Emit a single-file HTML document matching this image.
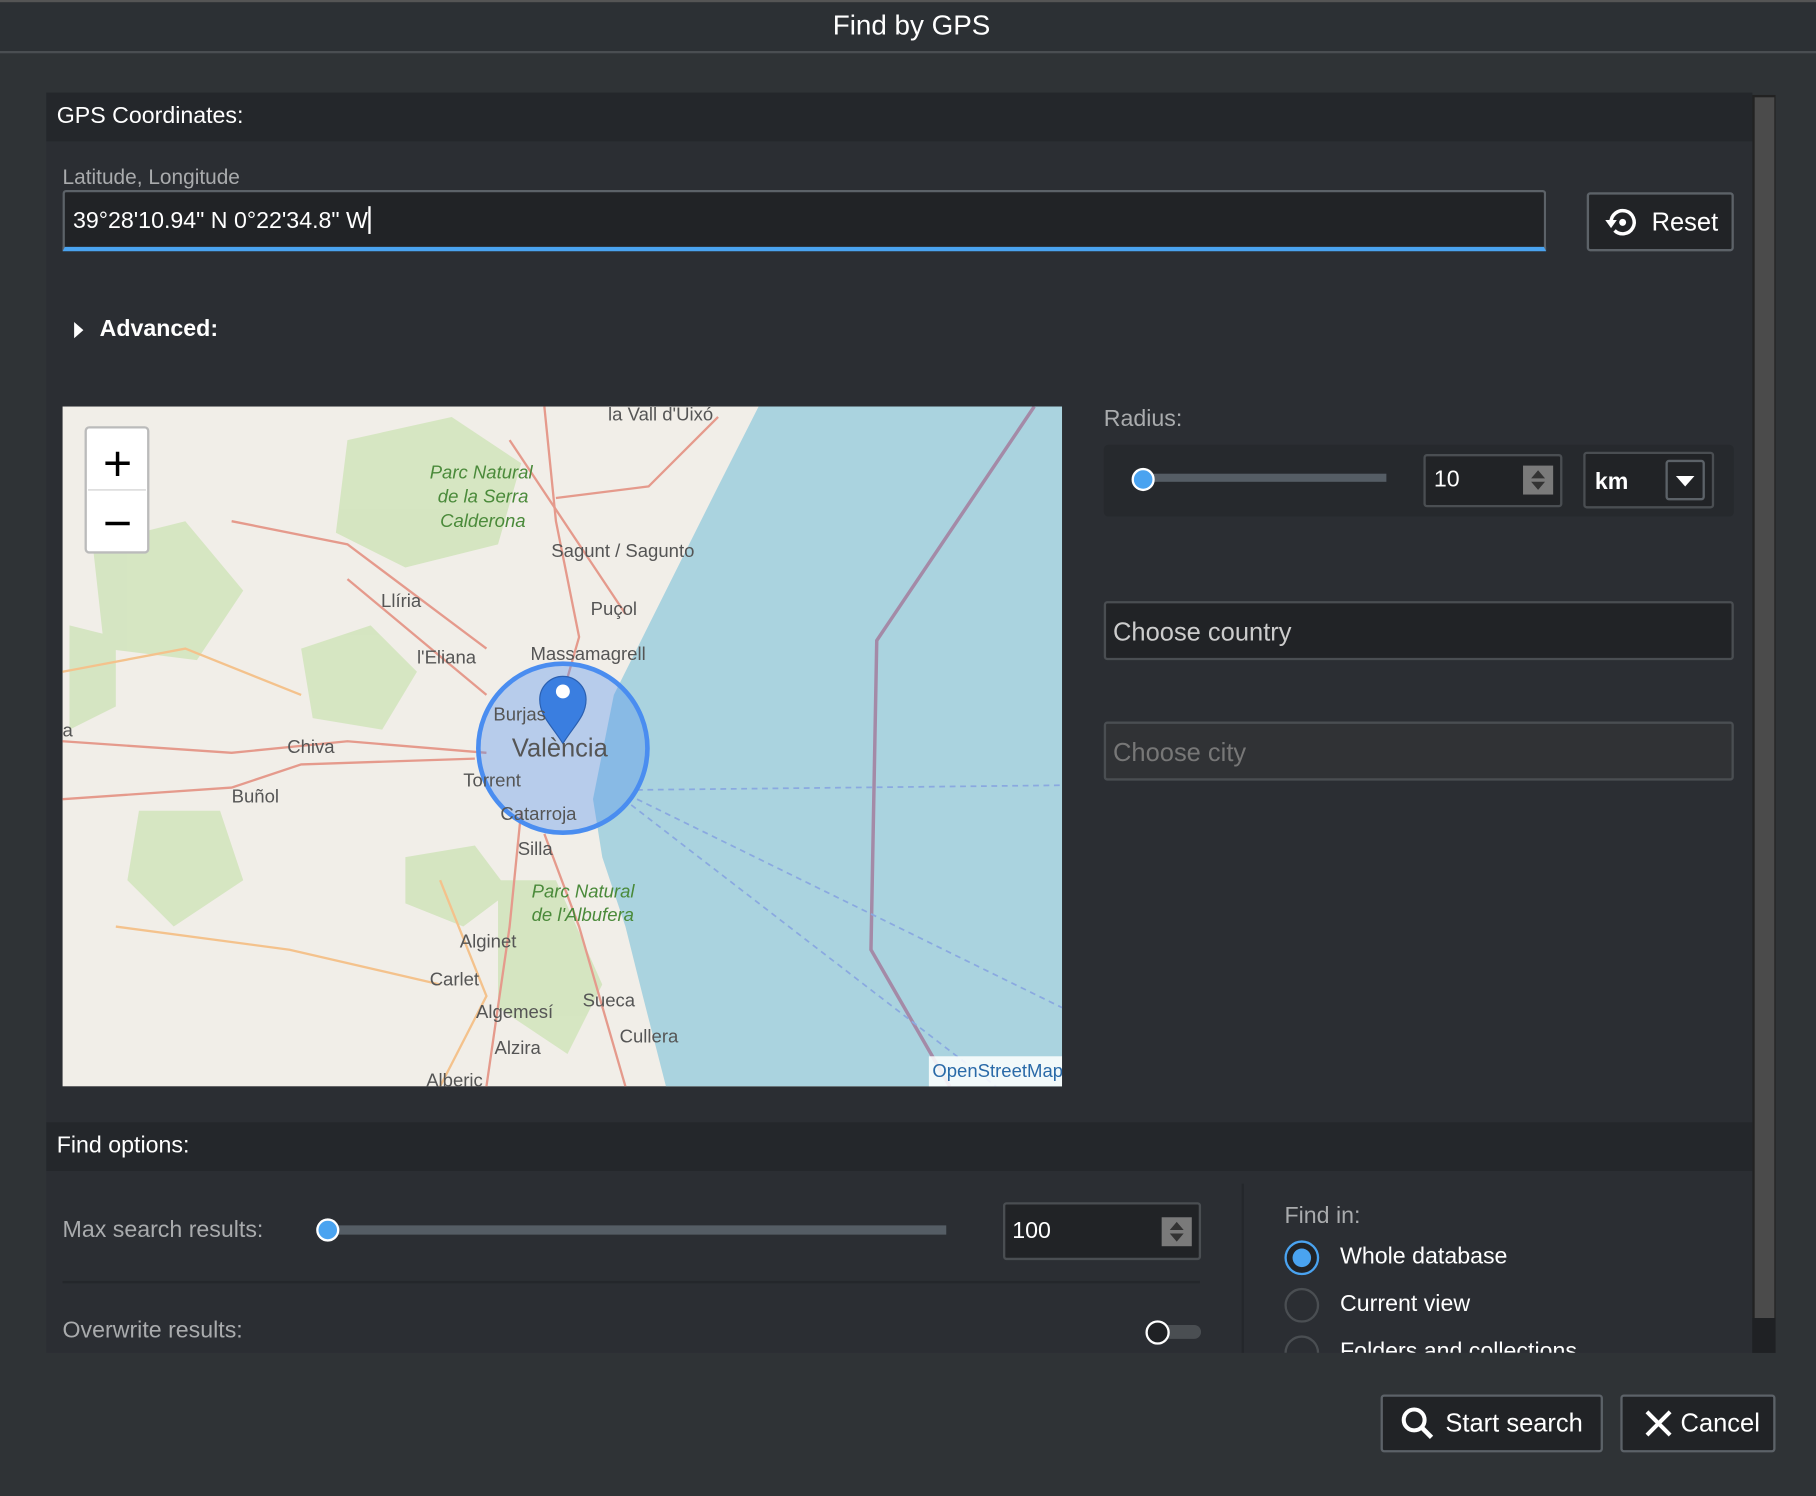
<!DOCTYPE html>
<html><head><meta charset="utf-8"><style>
*{box-sizing:border-box;margin:0;padding:0}
html,body{width:1816px;height:1496px;overflow:hidden;background:#2f3336;font-family:"Liberation Sans",sans-serif}
#s{position:absolute;left:0;top:0;width:1568px;height:1292px;transform:scale(1.1582);transform-origin:0 0;background:#2f3336}
.a{position:absolute}
.t{color:#fff;white-space:nowrap}
.g{color:#a9abad;white-space:nowrap}
</style></head><body><div id="s">
<div class="a" style="left:0;top:0;width:1568px;height:2px;background:#555"></div>
<div class="a" style="left:0;top:2px;width:1568px;height:42px;background:#2c3034"></div>
<div class="a t" style="left:0;width:1568px;top:9px;text-align:center;font-size:24px;padding-left:6px">Find by GPS</div>
<div class="a" style="left:0;top:44px;width:1568px;height:2px;background:#4a4e52"></div>

<div class="a" style="left:40px;top:80px;width:1473px;height:1088px;background:#2b2e33;overflow:hidden">
</div>
<div class="a" style="left:40px;top:80px;width:1473px;height:42px;background:#24272b"></div>
<div class="a t" style="left:49px;top:89px;font-size:20px">GPS Coordinates:</div>
<div class="a" style="left:1513px;top:82px;width:20px;height:1086px;background:#222"></div>
<div class="a" style="left:1515px;top:84px;width:17px;height:1054px;background:#4b4b4b"></div>

<div class="a g" style="left:54px;top:143px;font-size:18px">Latitude, Longitude</div>
<div class="a" style="left:54px;top:164px;width:1281px;height:53px;background:#212326;border:2px solid #5c6268;border-bottom:4px solid #4aa3f0;border-radius:3px 3px 0 0"></div>
<div class="a t" style="left:63px;top:178px;font-size:20px">39°28'10.94" N 0°22'34.8" W<span style="display:inline-block;width:2px;height:24px;background:#fff;vertical-align:-5px"></span></div>
<div class="a" style="left:1370px;top:166px;width:127px;height:51px;background:#212326;border:2px solid #5c6268;border-radius:3px"></div>
<svg class="a" style="left:1384px;top:176px" width="34" height="32" viewBox="0 0 34 32"><path d="M7 16a10 10 0 1 1 3 7" fill="none" stroke="#fff" stroke-width="3"/><path d="M2 14h10l-5 7z" fill="#fff"/><circle cx="17" cy="16" r="3" fill="#fff"/></svg>
<div class="a t" style="left:1426px;top:179px;font-size:22px">Reset</div>

<svg class="a" style="left:62px;top:277px" width="12" height="16"><path d="M2 1l8 7-8 7z" fill="#fff"/></svg>
<div class="a t" style="left:86px;top:273px;font-size:20px;font-weight:bold">Advanced:</div>

<svg class="a" style="left:54px;top:351px" width="863" height="587" viewBox="54 351 863 587">
<rect x="54" y="351" width="863" height="587" fill="#f1eee8"/>
<g fill="#cfe3b8" opacity=".8">
<path d="M300 380l90-20 60 40-20 70-80 20-60-30z"/><path d="M80 470l80-20 50 60-40 60-80-10z"/><path d="M260 560l60-20 40 40-30 50-60-10z"/><path d="M350 740l60-10 30 40-40 30-50-20z"/><path d="M120 700l70 0 20 60-60 40-40-40z"/><path d="M430 760l50 0 40 90-30 60-60-40z"/><path d="M60 540l40 10 0 60-40 20z"/>
</g>
<path d="M655 351L620 420 590 480 560 540 530 600 520 650 512 690 520 740 540 800 555 860 575 938H917V351z" fill="#aad3df"/>
<g fill="none" stroke="#e59a8c" stroke-width="2">
<path d="M54 640 200 650 300 640 420 650"/><path d="M54 690 200 680 260 660 410 655"/><path d="M300 500 420 600"/><path d="M470 351 480 450 500 550 480 620"/><path d="M440 380 500 470 540 530"/><path d="M450 700 440 800 420 938"/><path d="M470 720 500 800 540 938"/><path d="M200 450 300 470 420 560"/><path d="M480 430 560 420 620 360"/>
</g>
<g fill="none" stroke="#f4c28c" stroke-width="2"><path d="M54 580 160 560 260 600"/><path d="M380 760 420 860 380 938"/><path d="M100 800 250 820 380 850"/></g>
<path d="M893 351 757 553 752 820 820 938" fill="none" stroke="#a48aa7" stroke-width="3"/>
<g fill="none" stroke="#8aa9e0" stroke-width="1.5" stroke-dasharray="5 4"><path d="M550 682 917 678"/><path d="M550 690 917 870"/><path d="M545 695 860 938"/></g>
<circle cx="486" cy="646" r="73" fill="#4a8df0" fill-opacity=".35" stroke="#4a8df0" stroke-width="4"/>
<path d="M486 642c-10-16-20-24-20-38a20 20 0 0 1 40 0c0 14-10 22-20 38z" fill="#3a7ee0" stroke="#2a5fb0"/>
<circle cx="486" cy="597" r="6" fill="#fff"/>
<g font-family="Liberation Sans" fill="#555" font-size="16">
<text x="525" y="363">la Vall d'Uixó</text><text x="476" y="481">Sagunt / Sagunto</text><text x="510" y="531">Puçol</text><text x="329" y="524">Llíria</text><text x="360" y="573">l'Eliana</text><text x="458" y="570">Massamagrell</text><text x="248" y="650">Chiva</text><text x="200" y="693">Buñol</text><text x="426" y="622">Burjas</text><text x="442" y="653" font-size="22">València</text><text x="400" y="679">Torrent</text><text x="432" y="708">Catarroja</text><text x="447" y="738">Silla</text><text x="397" y="818">Alginet</text><text x="371" y="851">Carlet</text><text x="411" y="879">Algemesí</text><text x="503" y="869">Sueca</text><text x="535" y="900">Cullera</text><text x="427" y="910">Alzira</text><text x="368" y="938">Alberic</text><text x="54" y="636">a</text>
</g>
<g font-family="Liberation Sans" fill="#4a8a3a" font-size="16" font-style="italic"><text x="371" y="413">Parc Natural</text><text x="378" y="434">de la Serra</text><text x="380" y="455">Calderona</text><text x="459" y="775">Parc Natural</text><text x="459" y="795">de l'Albufera</text></g>
<rect x="802" y="912" width="115" height="26" fill="#fff" fill-opacity=".85"/>
<text x="805" y="930" font-family="Liberation Sans" font-size="16" fill="#2a6aa8">OpenStreetMap</text>
<rect x="74" y="369" width="54" height="108" rx="3" fill="#fff" stroke="#bbb" stroke-width="2"/>
<line x1="76" y1="423" x2="126" y2="423" stroke="#ccc"/>
<path d="M91 400h21M101.5 390v21M91 452h21" stroke="#000" stroke-width="3"/>
</svg>

<div class="a g" style="left:953px;top:351px;font-size:20px">Radius:</div>
<div class="a" style="left:953px;top:384px;width:544px;height:62px;background:#26292d;border-radius:4px"></div>
<div class="a" style="left:987px;top:409px;width:210px;height:7px;background:#555d65"></div>
<div class="a" style="left:977px;top:404px;width:20px;height:20px;border-radius:50%;background:#4aa3f0;border:2px solid #fff"></div>
<div class="a" style="left:1229px;top:392px;width:120px;height:46px;background:#212326;border:2px solid #4a4e52;border-radius:3px"></div>
<div class="a t" style="left:1238px;top:403px;font-size:20px">10</div>
<div class="a" style="left:1315px;top:402px;width:26px;height:25px;background:#7a7a7a"></div>
<svg class="a" style="left:1315px;top:402px" width="26" height="25"><path d="M7 11l6-7 6 7zM7 14l6 7 6-7z" fill="#333"/></svg>
<div class="a" style="left:1367px;top:390px;width:113px;height:49px;background:#212326;border:2px solid #4a4e52;border-radius:3px"></div>
<div class="a t" style="left:1377px;top:405px;font-size:20px;font-weight:bold">km</div>
<div class="a" style="left:1438px;top:397px;width:34px;height:35px;border:2px solid #5c6268;border-radius:3px"></div>
<svg class="a" style="left:1438px;top:397px" width="34" height="35"><path d="M9 14h16l-8 9z" fill="#fff"/></svg>

<div class="a" style="left:953px;top:519px;width:544px;height:51px;background:#212326;border:2px solid #4a4e52;border-radius:3px"></div>
<div class="a" style="left:961px;top:533px;font-size:22px;color:#ccc">Choose country</div>
<div class="a" style="left:953px;top:623px;width:544px;height:51px;background:#303235;border:2px solid #4a4e52;border-radius:3px"></div>
<div class="a" style="left:961px;top:637px;font-size:22px;color:#777">Choose city</div>

<div class="a" style="left:40px;top:969px;width:1473px;height:42px;background:#24272b"></div>
<div class="a t" style="left:49px;top:978px;font-size:20px">Find options:</div>
<div class="a g" style="left:54px;top:1051px;font-size:20px">Max search results:</div>
<div class="a" style="left:283px;top:1058px;width:534px;height:8px;background:#555d65"></div>
<div class="a" style="left:273px;top:1052px;width:20px;height:20px;border-radius:50%;background:#4aa3f0;border:2px solid #fff"></div>
<div class="a" style="left:866px;top:1038px;width:171px;height:50px;background:#212326;border:2px solid #4a4e52;border-radius:3px"></div>
<div class="a t" style="left:874px;top:1052px;font-size:20px">100</div>
<div class="a" style="left:1003px;top:1051px;width:26px;height:25px;background:#7a7a7a"></div>
<svg class="a" style="left:1003px;top:1051px" width="26" height="25"><path d="M7 11l6-7 6 7zM7 14l6 7 6-7z" fill="#333"/></svg>
<div class="a" style="left:54px;top:1106px;width:982px;height:2px;background:#24272b"></div>
<div class="a g" style="left:54px;top:1138px;font-size:20px">Overwrite results:</div>
<div class="a" style="left:999px;top:1144px;width:38px;height:12px;border-radius:6px;background:#4a4e52"></div>
<div class="a" style="left:989px;top:1140px;width:21px;height:21px;border-radius:50%;background:#1f2124;border:2px solid #fff"></div>
<div class="a" style="left:1072px;top:1022px;width:2px;height:146px;background:#24272b"></div>
<div class="a g" style="left:1109px;top:1039px;font-size:20px">Find in:</div>
<div class="a" style="left:1109px;top:1071px;width:30px;height:30px;border-radius:50%;border:2px solid #4aa3f0;background:#212326"></div>
<div class="a" style="left:1116px;top:1078px;width:16px;height:16px;border-radius:50%;background:#4aa3f0"></div>
<div class="a t" style="left:1157px;top:1074px;font-size:20px">Whole database</div>
<div class="a" style="left:1109px;top:1112px;width:30px;height:30px;border-radius:50%;border:2px solid #4a4e52;background:#2b2e33"></div>
<div class="a t" style="left:1157px;top:1115px;font-size:20px">Current view</div>
<div class="a" style="left:1040px;top:1150px;width:472px;height:18px;overflow:hidden">
<div class="a" style="left:69px;top:3px;width:30px;height:30px;border-radius:50%;border:2px solid #4a4e52"></div>
<div class="a t" style="left:117px;top:6px;font-size:20px">Folders and collections</div></div>
<div class="a" style="left:1513px;top:1138px;width:20px;height:30px;background:#1f2124"></div>

<div class="a" style="left:1192px;top:1204px;width:192px;height:50px;background:#212326;border:2px solid #5c6268;border-radius:3px"></div>
<svg class="a" style="left:1208px;top:1213px" width="32" height="32"><circle cx="13" cy="13" r="9" fill="none" stroke="#fff" stroke-width="3.5"/><path d="M19 19l9 9" stroke="#fff" stroke-width="4"/></svg>
<div class="a t" style="left:1248px;top:1216px;font-size:22px">Start search</div>
<div class="a" style="left:1399px;top:1204px;width:134px;height:50px;background:#212326;border:2px solid #5c6268;border-radius:3px"></div>
<svg class="a" style="left:1419px;top:1216px" width="26" height="26"><path d="M3 3l20 20M23 3L3 23" stroke="#fff" stroke-width="3.5"/></svg>
<div class="a t" style="left:1451px;top:1216px;font-size:22px">Cancel</div>
</div></body></html>
